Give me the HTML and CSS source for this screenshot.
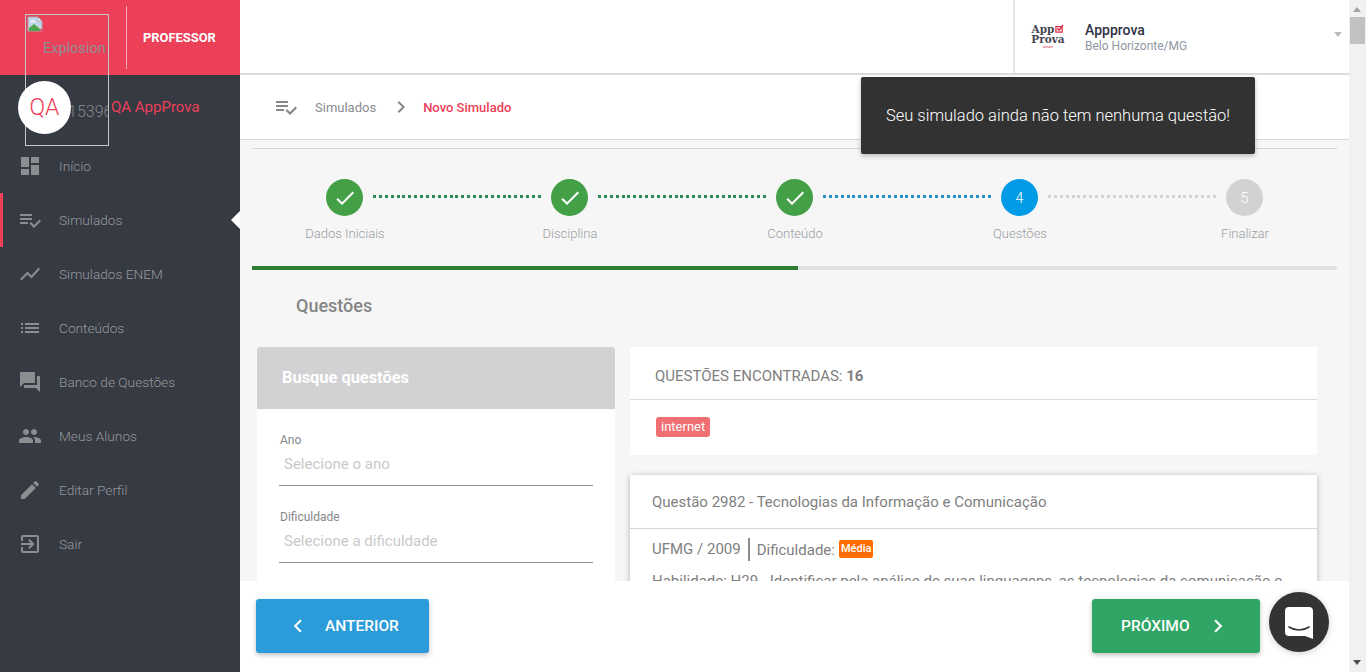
FILE: index.html
```html
<!DOCTYPE html>
<html>

<head>
    <title>Novo Simulado</title>
    <link rel="stylesheet" href="styles.css">
</head>

<body>

    <div class="app">

        <aside class="sidebar">
            <div class="brand">
                <div class="brand-logo"></div>
                <div class="brand-role">PROFESSOR</div>
            </div>

            <div class="user">
                <div class="user-avatar">QA</div>
                <div class="user-name">QA AppProva</div>
            </div>

            <!-- broken logo image sits over the brand and user rows -->
            <div class="broken-image">
                <svg class="broken-icon" viewBox="0 0 16 16">
                    <path d="M1 1h10l4 4v10H1z" fill="#c4d6ea" stroke="#a5a9ae"/>
                    <path d="M11 1v4h4z" fill="#fff" stroke="#a5a9ae"/>
                    <path d="M2 15v-3l5-4 5 4 2 3z" fill="#4ea84a"/>
                    <path d="M3 6c1-2 4-2 5 0z" fill="#fff"/>
                    <path d="M12 15l3-3v3z" fill="#ec4058"/>
                </svg>
                <span class="broken-alt">Explosion</span>
                <span class="broken-id">15396</span>
            </div>

            <nav class="menu">
                <a class="menu-item">
                    <svg class="menu-icon" viewBox="0 0 24 24"><path d="M3 13h8V3H3v10zm0 8h8v-6H3v6zm10 0h8V11h-8v10zm0-18v6h8V3h-8z"/></svg>
                    Início
                </a>
                <a class="menu-item active">
                    <svg class="menu-icon" viewBox="0 0 24 24"><path d="M14 10H2v2h12v-2zm0-4H2v2h12V6zM2 16h8v-2H2v2zm19.5-4.5L23 13l-6.99 7-4.51-4.5L13 14l3.01 3 5.49-5.5z"/></svg>
                    Simulados
                </a>
                <a class="menu-item">
                    <svg class="menu-icon" viewBox="0 0 24 24"><path d="M3.5 18.49l6-6.01 4 4L22 6.92l-1.41-1.41-7.09 7.97-4-4L2 16.99z"/></svg>
                    Simulados ENEM
                </a>
                <a class="menu-item">
                    <svg class="menu-icon" viewBox="0 0 24 24"><path d="M3 13h2v-2H3v2zm0 4h2v-2H3v2zm0-8h2V7H3v2zm4 4h14v-2H7v2zm0 4h14v-2H7v2zM7 7v2h14V7H7z"/></svg>
                    Conteúdos
                </a>
                <a class="menu-item">
                    <svg class="menu-icon" viewBox="0 0 24 24"><path d="M21 6h-2v9H6v2c0 .55.45 1 1 1h11l4 4V7c0-.55-.45-1-1-1zm-4 6V3c0-.55-.45-1-1-1H3c-.55 0-1 .45-1 1v14l4-4h10c.55 0 1-.45 1-1z"/></svg>
                    Banco de Questões
                </a>
                <a class="menu-item">
                    <svg class="menu-icon" viewBox="0 0 24 24"><path d="M16 11c1.66 0 2.99-1.34 2.99-3S17.66 5 16 5c-1.66 0-3 1.34-3 3s1.34 3 3 3zm-8 0c1.66 0 2.99-1.34 2.99-3S9.66 5 8 5C6.34 5 5 6.34 5 8s1.34 3 3 3zm0 2c-2.33 0-7 1.17-7 3.5V19h14v-2.5c0-2.33-4.67-3.5-7-3.5zm8 0c-.29 0-.62.02-.97.05 1.16.84 1.97 1.97 1.97 3.45V19h6v-2.5c0-2.33-4.67-3.5-7-3.5z"/></svg>
                    Meus Alunos
                </a>
                <a class="menu-item">
                    <svg class="menu-icon" viewBox="0 0 24 24"><path d="M3 17.25V21h3.75L17.81 9.94l-3.75-3.75L3 17.25zM20.71 7.04c.39-.39.39-1.02 0-1.41l-2.34-2.34c-.39-.39-1.02-.39-1.41 0l-1.83 1.83 3.75 3.75 1.83-1.83z"/></svg>
                    Editar Perfil
                </a>
                <a class="menu-item">
                    <svg class="menu-icon" viewBox="0 0 24 24"><path d="M10.09 15.59L11.5 17l5-5-5-5-1.41 1.41L12.67 11H3v2h9.67l-2.58 2.59zM19 3H5c-1.11 0-2 .9-2 2v4h2V5h14v14H5v-4H3v4c0 1.1.89 2 2 2h14c1.1 0 2-.9 2-2V5c0-1.1-.9-2-2-2z"/></svg>
                    Sair
                </a>
            </nav>
        </aside>

        <main class="main">

            <header class="topbar">
                <div class="school">
                    <div class="school-logo">
                        <span class="logo-line">App<svg class="logo-check" viewBox="0 0 10 10"><path d="M1 3h7v6H1z" fill="none" stroke="#e0314b" stroke-width="1.4"/><path d="M2.5 5l2 2L9 1" fill="none" stroke="#e0314b" stroke-width="1.6"/></svg></span>
                        <span class="logo-line">Prova</span>
                        <span class="logo-small">smart</span>
                    </div>
                    <div class="school-info">
                        <div class="school-name">Appprova</div>
                        <div class="school-city">Belo Horizonte/MG</div>
                    </div>
                    <div class="school-caret"></div>
                </div>
            </header>

            <div class="breadcrumb">
                <svg class="crumb-icon" viewBox="0 0 24 24"><path d="M14 10H2v2h12v-2zm0-4H2v2h12V6zM2 16h8v-2H2v2zm19.5-4.5L23 13l-6.99 7-4.51-4.5L13 14l3.01 3 5.49-5.5z"/></svg>
                <span class="crumb">Simulados</span>
                <svg class="crumb-sep" viewBox="0 0 24 24"><path d="M10 6L8.59 7.41 13.17 12l-4.58 4.59L10 18l6-6z"/></svg>
                <span class="crumb-current">Novo Simulado</span>
            </div>

            <div class="content">
                <div class="wizard">
                    <div class="step-track">
                        <div class="step-circle done"><svg viewBox="0 0 24 24"><path d="M9 16.17L4.83 12l-1.42 1.41L9 19 21 7l-1.41-1.41z"/></svg></div>
                        <div class="step-line line-green"></div>
                        <div class="step-circle done"><svg viewBox="0 0 24 24"><path d="M9 16.17L4.83 12l-1.42 1.41L9 19 21 7l-1.41-1.41z"/></svg></div>
                        <div class="step-line line-green"></div>
                        <div class="step-circle done"><svg viewBox="0 0 24 24"><path d="M9 16.17L4.83 12l-1.42 1.41L9 19 21 7l-1.41-1.41z"/></svg></div>
                        <div class="step-line line-blue"></div>
                        <div class="step-circle current">4</div>
                        <div class="step-line line-grey"></div>
                        <div class="step-circle todo">5</div>
                    </div>
                    <div class="step-labels">
                        <span>Dados Iniciais</span>
                        <span>Disciplina</span>
                        <span>Conteúdo</span>
                        <span>Questões</span>
                        <span>Finalizar</span>
                    </div>
                    <div class="progress">
                        <div class="progress-fill"></div>
                    </div>
                </div>

                <h2 class="section-title">Questões</h2>

                <div class="columns">
                    <section class="search-panel">
                        <div class="search-head">Busque questões</div>
                        <div class="search-body">
                            <div class="field">
                                <label>Ano</label>
                                <div class="field-input">Selecione o ano</div>
                            </div>
                            <div class="field">
                                <label>Dificuldade</label>
                                <div class="field-input">Selecione a dificuldade</div>
                            </div>
                        </div>
                    </section>

                    <section class="results">
                        <div class="results-box">
                            <div class="results-head">QUESTÕES ENCONTRADAS: <b>16</b></div>
                            <div class="results-tags"><span class="tag">internet</span></div>
                        </div>
                        <article class="question">
                            <div class="question-head">Questão 2982 - Tecnologias da Informação e Comunicação</div>
                            <div class="question-body">
                                <div class="question-meta">
                                    <span class="meta-source">UFMG / 2009</span>
                                    <span>Dificuldade:</span>
                                    <span class="level">Média</span>
                                </div>
                                <p class="question-skill">Habilidade: H29 - Identificar pela análise de suas linguagens, as tecnologias da comunicação e</p>
                            </div>
                        </article>
                    </section>
                </div>
            </div>

            <footer class="actions">
                <button type="button" class="btn btn-back">
                    <svg viewBox="0 0 24 24"><path d="M15.41 7.41L14 6l-6 6 6 6 1.41-1.41L10.83 12z"/></svg>
                    ANTERIOR
                </button>
                <div class="actions-right">
                    <button type="button" class="btn btn-next">
                        PRÓXIMO
                        <svg viewBox="0 0 24 24"><path d="M10 6L8.59 7.41 13.17 12l-4.58 4.59L10 18l6-6z"/></svg>
                    </button>
                    <div class="chat">
                        <svg viewBox="0 0 28 32"><path d="M4 0h20a4 4 0 0 1 4 4v28l-8-3H4a4 4 0 0 1-4-4V4a4 4 0 0 1 4-4z" fill="#fff"/><path d="M4 20c6 4 14 4 20 0" fill="none" stroke="#333" stroke-width="1.6" stroke-linecap="round"/></svg>
                    </div>
                </div>
            </footer>

            <div class="toast">Seu simulado ainda não tem nenhuma questão!</div>
        </main>

        <div class="scrollbar">
            <div class="scroll-up"></div>
            <div class="scroll-thumb"></div>
            <div class="scroll-down"></div>
        </div>

    </div>

</body>

</html>
```

FILE: styles.css
```css
* {
    box-sizing: border-box;
}

body {
    font-family: Roboto, "Liberation Sans", sans-serif;
    margin: 0;
    color: #808080;
}

.app {
    display: flex;
    height: 672px;
    overflow: hidden;
}

/* sidebar */

.sidebar {
    position: relative;
    flex: 0 0 240px;
    background: #363a43;
}

.brand {
    display: flex;
    align-items: center;
    height: 75px;
    padding-left: 126px;
    background: #ec4058;
}

.brand-logo {
    width: 1px;
    height: 63px;
    background: rgba(255, 255, 255, 0.55);
}

.brand-role {
    margin-left: 16px;
    color: white;
    font-size: 12.9px;
    font-weight: 700;
}

.user {
    display: flex;
    align-items: center;
    height: 64px;
    padding-left: 18px;
}

.user-avatar {
    display: flex;
    align-items: center;
    justify-content: center;
    position: relative;
    z-index: 2;
    width: 53px;
    height: 53px;
    border-radius: 50%;
    background: white;
    color: #ec4058;
    font-size: 23px;
    font-weight: 300;
}

.user-name {
    margin-left: 40px;
    color: #ec4058;
    font-size: 15px;
}

.broken-image {
    position: absolute;
    left: 25px;
    top: 14px;
    width: 84px;
    height: 132px;
    border: 1px solid #c3c7c9;
    overflow: hidden;
}

.broken-icon {
    position: absolute;
    left: 1px;
    top: 1px;
    width: 16px;
    height: 16px;
}

.broken-alt {
    position: absolute;
    left: 17px;
    top: 25px;
    color: #8c8f93;
    font-size: 14.5px;
}

.broken-id {
    position: absolute;
    left: 42px;
    top: 87px;
    color: #85878b;
    font-size: 16px;
    font-weight: 300;
}

.menu-item {
    position: relative;
    display: flex;
    align-items: center;
    height: 54px;
    padding-left: 18px;
    color: #97999d;
    font-size: 13.7px;
    font-weight: 300;
}

.menu-item.active {
    box-shadow: inset 3px 0 0 #ec4058;
}

.menu-item.active::after {
    content: "";
    position: absolute;
    right: 0;
    top: 18px;
    border-top: 9px solid transparent;
    border-bottom: 9px solid transparent;
    border-right: 9px solid white;
}

.menu-icon {
    width: 24px;
    height: 24px;
    margin-right: 17px;
    fill: #8b8d91;
}

/* main area */

.main {
    position: relative;
    display: flex;
    flex-direction: column;
    flex: 1;
    min-width: 0;
    background: white;
}

.topbar {
    display: flex;
    justify-content: flex-end;
    height: 75px;
    border-bottom: 2px solid #dcdcdc;
}

.school {
    display: flex;
    align-items: center;
    width: 336px;
    padding-left: 15px;
    border-left: 2px solid #e6e6e6;
}

.school-logo {
    display: flex;
    flex-direction: column;
    width: 36px;
    margin-bottom: 1px;
    color: #45464f;
    font-family: "DejaVu Serif", serif;
    font-size: 10.5px;
    font-weight: 700;
    line-height: 10px;
    text-align: center;
}

.logo-line {
    display: block;
    white-space: nowrap;
}

.logo-check {
    width: 9px;
    height: 9px;
    margin-left: 1px;
}

.logo-small {
    color: #e0314b;
    font-family: Roboto, sans-serif;
    font-size: 4px;
    font-weight: 400;
    line-height: 5px;
}

.school-info {
    margin-left: 19px;
    padding-top: 2px;
}

.school-name {
    color: #2f3245;
    font-size: 14px;
    font-weight: 500;
    line-height: 17px;
}

.school-city {
    color: #8f96a3;
    font-size: 12px;
    line-height: 15px;
}

.school-caret {
    margin-left: auto;
    margin-right: 7px;
    margin-top: -4px;
    border-left: 4.5px solid transparent;
    border-right: 4.5px solid transparent;
    border-top: 5px solid #bdbdbd;
}

.breadcrumb {
    display: flex;
    align-items: center;
    height: 65px;
    padding-left: 34px;
    border-bottom: 1px solid #d6d6d6;
    font-size: 13px;
}

.crumb-icon {
    width: 24px;
    height: 24px;
    fill: #85878b;
}

.crumb {
    margin-left: 17px;
    color: #8a8c90;
}

.crumb-sep {
    width: 24px;
    height: 24px;
    margin-left: 13px;
    fill: #85878b;
}

.crumb-current {
    margin-left: 10px;
    color: #ec4058;
    font-weight: 500;
    font-size: 13px;
}

.content {
    flex: 1;
    min-height: 0;
    padding: 8px 12px 0;
    overflow: hidden;
    background: #f6f6f6;
}

/* stepper */

.wizard {
    padding-top: 30px;
    border-top: 1px solid #d6d6d6;
}

.step-track {
    display: flex;
    align-items: center;
    padding-left: 74px;
}

.step-circle {
    display: flex;
    align-items: center;
    justify-content: center;
    flex: 0 0 37px;
    height: 37px;
    border-radius: 50%;
    color: white;
    font-size: 14px;
    font-weight: 300;
}

.step-circle svg {
    width: 24px;
    height: 24px;
    fill: white;
}

.done {
    background: #43a047;
}

.current {
    background: #039be5;
}

.todo {
    background: #d1d2d4;
    font-size: 15px;
}

.step-line {
    flex: 0 0 168px;
    height: 3px;
    margin: 0 10px;
    position: relative;
    top: -1px;
}

.line-green {
    background: repeating-linear-gradient(90deg, #2e8b57 0 3px, transparent 3px 5.89px);
}

.line-blue {
    background: repeating-linear-gradient(90deg, #2a8fc9 0 3px, transparent 3px 5.89px);
}

.line-grey {
    background: repeating-linear-gradient(90deg, #d1d2d4 0 3px, transparent 3px 5.89px);
}

.step-labels {
    display: grid;
    grid-template-columns: repeat(5, 120px);
    column-gap: 105px;
    margin-top: 9px;
    padding-left: 33px;
    color: #9b9da1;
    font-size: 13px;
    font-weight: 300;
    line-height: 17px;
    text-align: center;
}

.progress {
    height: 4px;
    margin-top: 24px;
    background: #e0e0e0;
    border-radius: 2px;
}

.progress-fill {
    width: 546px;
    height: 4px;
    background: #2e7d32;
}

.section-title {
    margin: 25px 0 0 44px;
    color: #858585;
    font-size: 18px;
    font-weight: 500;
    line-height: 21px;
}

/* panels */

.columns {
    display: flex;
    gap: 15px;
    margin-top: 31px;
    padding-left: 5px;
}

.search-panel {
    flex: 0 0 358px;
    background: white;
    border-radius: 3px 3px 0 0;
}

.search-head {
    height: 62px;
    padding-left: 25px;
    background: #d1d2d4;
    border-radius: 3px 3px 0 0;
    color: white;
    font-size: 16.4px;
    font-weight: 700;
    line-height: 62px;
}

.search-body {
    padding: 0 22px;
}

.field {
    height: 77px;
    padding-top: 24px;
}

.field label {
    display: block;
    padding-left: 1px;
    color: #85878b;
    font-size: 12px;
    line-height: 15px;
}

.field-input {
    height: 38px;
    padding: 6px 0 0 5px;
    border-bottom: 1px solid #8f8f8f;
    color: #c9c9c9;
    font-size: 15px;
    line-height: 20px;
}

.results {
    flex: 0 0 687px;
}

.results-box {
    height: 108px;
    margin-bottom: 20px;
    background: white;
}

.results-head {
    height: 53px;
    padding-left: 25px;
    border-bottom: 1px solid #dcdcdc;
    font-size: 15px;
    line-height: 58px;
}

.results-tags {
    padding: 17px 0 0 26px;
}

.tag {
    display: block;
    width: fit-content;
    height: 20px;
    padding: 0 5px;
    background: #ef6f73;
    border-radius: 3px;
    color: white;
    font-size: 13px;
    line-height: 19px;
}

.question {
    background: white;
    box-shadow: 0 1px 6px rgba(0, 0, 0, 0.28);
}

.question-head {
    height: 54px;
    padding-left: 22px;
    border-bottom: 1px solid #d6d6d6;
    font-size: 15px;
    line-height: 55px;
}

.question-body {
    padding: 9px 22px 20px;
    font-size: 15px;
}

.question-meta {
    display: flex;
    align-items: center;
    height: 23px;
}

.meta-source {
    height: 23px;
    margin-right: 7px;
    padding-right: 7px;
    border-right: 2px solid #8c8c8c;
    line-height: 22px;
}

.level {
    margin-left: 4px;
    padding: 0 2px;
    background: #ff6d00;
    border-radius: 2px;
    color: white;
    font-size: 11px;
    font-weight: 500;
    line-height: 18px;
    position: relative;
    top: -1px;
}

.question-skill {
    margin: 10px 0 0;
    line-height: 20px;
    white-space: nowrap;
}

/* footer buttons */

.actions {
    position: relative;
    z-index: 1;
    display: flex;
    justify-content: space-between;
    flex: 0 0 91px;
    padding: 18px 20px 0 16px;
    background: white;
}

.actions-right {
    display: flex;
    gap: 9px;
}

.btn {
    display: flex;
    align-items: center;
    height: 54px;
    border: none;
    border-radius: 3px;
    box-shadow: 0 2px 5px rgba(0, 0, 0, 0.25);
    color: white;
    font-family: inherit;
    font-size: 15.5px;
    font-weight: 500;
    cursor: pointer;
}

.btn svg {
    width: 26px;
    height: 26px;
    fill: white;
}

.btn-back {
    width: 173px;
    padding-left: 29px;
    background: #2b9cd9;
}

.btn-back svg {
    margin-right: 14px;
}

.btn-next {
    width: 168px;
    padding-left: 29px;
    background: #2fa566;
}

.btn-next svg {
    margin-left: 15px;
}

.chat {
    display: flex;
    align-items: center;
    justify-content: center;
    width: 60px;
    height: 60px;
    margin-top: -7px;
    border-radius: 50%;
    background: #333;
    box-shadow: 0 1px 6px rgba(0, 0, 0, 0.2);
}

.chat svg {
    width: 28px;
    height: 32px;
    margin-top: 1px;
}

/* toast */

.toast {
    position: absolute;
    left: 621px;
    top: 77px;
    z-index: 5;
    width: 394px;
    height: 77px;
    background: #323232;
    border-radius: 2px;
    box-shadow: 0 2px 5px rgba(0, 0, 0, 0.25);
    color: white;
    font-size: 16.5px;
    font-weight: 300;
    line-height: 78px;
    text-align: center;
}

/* browser scrollbar */

.scrollbar {
    position: relative;
    flex: 0 0 17px;
    background: #f1f1f1;
}

.scroll-thumb {
    position: absolute;
    left: 1px;
    top: 17px;
    width: 15px;
    height: 27px;
    background: #c1c1c1;
}

.scroll-up,
.scroll-down {
    position: absolute;
    left: 4px;
    border-left: 4.5px solid transparent;
    border-right: 4.5px solid transparent;
}

.scroll-up {
    top: 7px;
    border-bottom: 5px solid #a3a3a3;
}

.scroll-down {
    bottom: 7px;
    border-top: 5px solid #505050;
}
```
